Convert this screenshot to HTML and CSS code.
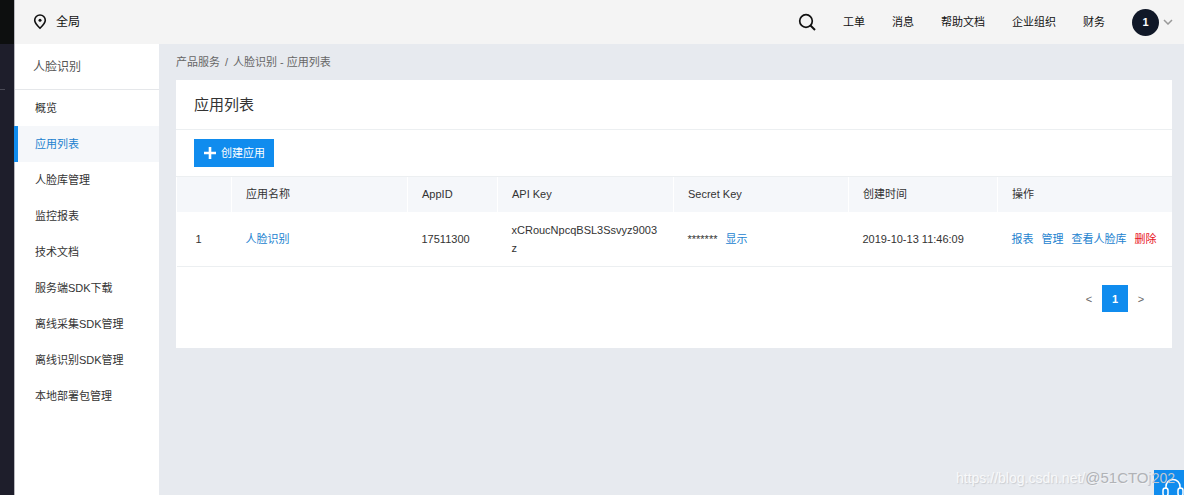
FILE: index.html
```html
<!DOCTYPE html>
<html lang="zh-CN">
<head>
<meta charset="utf-8">
<title>应用列表</title>
<link rel="stylesheet" href="styles.css">
</head>
<body>
<div class="app">
  <div class="rail"><div class="rail-top"></div><div class="rail-line"></div></div>
  <div class="shell">
    <header class="topbar">
      <button class="region" type="button">
        <svg class="pin" viewBox="0 0 14 16" aria-hidden="true"><path d="M7 14.200C4.400 11.700 1.700 9.200 1.700 6.300a5.300 5.300 0 0 1 10.600 0C12.300 9.200 9.600 11.700 7 14.200z" fill="none" stroke="#111" stroke-width="1.6"/><circle cx="7" cy="6.300" r="1.500" fill="#111"/></svg>
        <span>全局</span>
      </button>
      <nav class="topnav">
        <button class="icon-button" type="button" aria-label="搜索">
          <svg class="search" viewBox="0 0 18 18" aria-hidden="true"><circle cx="8" cy="8" r="6.300" fill="none" stroke="#111" stroke-width="1.7"/><path d="M12.500 12.500L17 17" stroke="#111" stroke-width="1.9"/></svg>
        </button>
        <a href="#">工单</a>
        <a href="#">消息</a>
        <a href="#">帮助文档</a>
        <a href="#">企业组织</a>
        <a href="#">财务</a>
        <button class="account" type="button"><span class="avatar">1</span><svg class="chevron" viewBox="0 0 10 6" aria-hidden="true"><path d="M1 1l4 4 4-4" fill="none" stroke="#999" stroke-width="1.5"/></svg></button>
      </nav>
    </header>
    <div class="body">
      <aside class="sidebar">
        <h2 class="sidebar-title">人脸识别</h2>
        <nav class="menu">
          <a href="#">概览</a>
          <a class="active" href="#">应用列表</a>
          <a href="#">人脸库管理</a>
          <a href="#">监控报表</a>
          <a href="#">技术文档</a>
          <a href="#">服务端SDK下载</a>
          <a href="#">离线采集SDK管理</a>
          <a href="#">离线识别SDK管理</a>
          <a href="#">本地部署包管理</a>
        </nav>
      </aside>
      <main class="content">
        <div class="crumbs"><a href="#">产品服务</a><span>/</span><span>人脸识别 - 应用列表</span></div>
        <section class="card">
          <h1 class="card-title">应用列表</h1>
          <div class="toolbar">
            <button class="create" type="button"><svg class="plus" viewBox="0 0 12 12" aria-hidden="true"><path d="M6 0v12M0 6h12" stroke="#fff" stroke-width="2.6"/></svg><span>创建应用</span></button>
          </div>
          <table class="apps">
            <colgroup><col class="c-no"><col class="c-name"><col class="c-id"><col class="c-key"><col class="c-secret"><col class="c-time"><col class="c-ops"></colgroup>
            <thead><tr><th></th><th>应用名称</th><th>AppID</th><th>API Key</th><th>Secret Key</th><th>创建时间</th><th>操作</th></tr></thead>
            <tbody><tr>
              <td class="no">1</td>
              <td><a href="#">人脸识别</a></td>
              <td>17511300</td>
              <td class="key">xCRoucNpcqBSL3Ssvyz9003z</td>
              <td><div class="actions"><span>*******</span><a href="#">显示</a></div></td>
              <td>2019-10-13 11:46:09</td>
              <td><div class="actions"><a href="#">报表</a><a href="#">管理</a><a href="#">查看人脸库</a><a class="danger" href="#">删除</a></div></td>
            </tr></tbody>
          </table>
          <nav class="pager" aria-label="分页">
            <button type="button">&lt;</button>
            <button class="current" type="button">1</button>
            <button type="button">&gt;</button>
          </nav>
        </section>
      </main>
    </div>
  </div>
  <button class="support" type="button" aria-label="客服">
    <svg viewBox="0 0 24 24" aria-hidden="true"><path d="M5 12V9.500a7 7 0 0 1 14 0V12" fill="none" stroke="#fff" stroke-width="1.6"/><rect x="2" y="11" width="5" height="8" rx="2.500" fill="none" stroke="#fff" stroke-width="1.5"/><rect x="17" y="11" width="5" height="8" rx="2.500" fill="none" stroke="#fff" stroke-width="1.5"/></svg>
  </button>
  <div class="marks"><span class="mark-url">https://blog.csdn.net/</span><span class="mark-name">@51CTO</span><span class="mark-tail">j202</span></div>
</div>
</body>
</html>
```
FILE: styles.css
```css
* { box-sizing: border-box; }
body {
  margin: 0;
  background: #e7eaef;
  color: #333;
  font: 11px/18px "Liberation Sans", "Noto Sans CJK SC", sans-serif;
}
a { color: #2282cf; text-decoration: none; }
button { padding: 0; border: 0; background: none; color: inherit; font: inherit; cursor: pointer; }
svg { display: block; flex: none; }

.app { position: relative; display: flex; min-height: 100vh; overflow: hidden; }
.rail { flex: none; width: 14px; background: #1e1e2b; }
.rail-top { height: 44px; background: #0d0f0f; }
.rail-line { width: 5px; height: 46px; border-bottom: 1px solid #4a4a56; }
.shell { flex: 1; min-width: 0; display: flex; flex-direction: column; border-left: 1px solid #b9b9bf; }

.topbar { display: flex; justify-content: space-between; align-items: center; height: 44px; padding: 0 11px 0 18px; background: #f4f4f4; color: #111; }
.region { display: flex; align-items: center; gap: 9px; font-size: 12px; }
.pin { width: 14px; height: 16px; }
.topnav { display: flex; align-items: center; gap: 27px; }
.topnav a { color: #111; }
.search { width: 18px; height: 18px; }
.account { display: flex; align-items: center; gap: 4px; }
.avatar { width: 27px; height: 27px; border-radius: 50%; background: #101828; color: #fff; font-weight: 700; line-height: 27px; }
.chevron { width: 10px; height: 6px; }

.body { flex: 1; display: flex; }
.sidebar { flex: none; width: 144px; background: #fff; }
.sidebar-title { margin: 0; height: 46px; padding-left: 18px; border-bottom: 1px solid #e5e7ea; color: #555; font-size: 12px; font-weight: 400; line-height: 46px; }
.menu { display: flex; flex-direction: column; }
.menu a { padding-left: 20px; color: #333; line-height: 36px; }
.menu .active { margin-left: -1px; padding-left: 17px; border-left: 4px solid #108cee; background: #f5f7fa; color: #2282cf; }

.content { flex: 1; min-width: 0; padding: 9px 12px 20px 17px; }
.crumbs { display: flex; gap: 5px; margin-bottom: 9px; color: #666; }
.crumbs a { color: inherit; }
.card { padding-bottom: 36px; background: #fff; }
.card-title { margin: 0; padding-left: 18px; border-bottom: 1px solid #eceff1; font-size: 15px; font-weight: 400; line-height: 49px; }
.toolbar { padding: 9px 18px; }
.create { display: flex; align-items: center; gap: 5px; height: 28px; padding: 0 9px 0 10px; background: #108cee; color: #fff; }
.plus { width: 12px; height: 12px; }

.apps { width: 100%; border-collapse: collapse; table-layout: fixed; text-align: left; }
.c-no { width: 55px; }
.c-name, .c-key { width: 176px; }
.c-id { width: 90px; }
.c-secret { width: 175px; }
.c-time { width: 149px; }
.apps th { height: 35px; padding: 0 14px; border-top: 1px solid #eceff1; border-left: 1px solid #fff; background: #f5f7fa; font-weight: 400; }
.apps td { height: 55px; padding: 9px 14px; border-bottom: 1px solid #eceff1; }
.apps .no { padding-left: 19px; }
.apps .key { word-break: break-all; }
.actions { display: flex; gap: 8px; white-space: nowrap; }
.apps .danger { color: #e8121e; }

.pager { display: flex; justify-content: flex-end; padding: 18px 18px 0; color: #666; }
.pager button { width: 26px; height: 27px; }
.pager .current { background: #108cee; color: #fff; font-weight: 700; }

.support { position: absolute; right: -6px; bottom: -11px; width: 36px; height: 36px; padding: 7px; background: #108cee; }
.support svg { width: 24px; height: 24px; }
.marks { position: absolute; right: 9px; bottom: 8px; display: flex; font-size: 14px; pointer-events: none; }
.mark-url { color: #f8f9fa; text-shadow: 1px 1px 1px #c9ccd1; }
.mark-name { color: #b1b3b7; font-size: 15px; text-shadow: 1px 1px 0 #f2f3f5; }
.mark-tail { color: #bfc7d0; }
```
